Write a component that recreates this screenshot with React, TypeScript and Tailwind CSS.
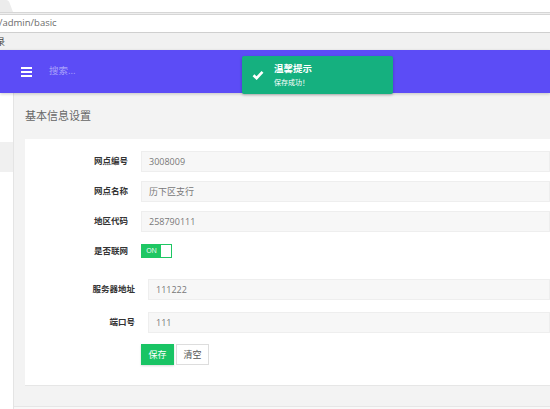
import React from 'react';

const font = "font-['Open_Sans','Noto_Sans_CJK_SC',sans-serif]";

function Field({ label, value, labelW }: { label: string; value: string; labelW: string }) {
  return (
    <div className="flex items-center">
      <div className={`${labelW} shrink-0 text-right text-[8.5px] font-bold text-[#333]`}>{label}</div>
      <div className="ml-[13px] h-[21px] flex-1 border border-[#eeeeee] bg-[#f7f7f7] pl-[7px] flex items-center text-[9px] text-[#777]">
        {value}
      </div>
    </div>
  );
}

export default function App() {
  return (
    <div className={`w-[550px] h-[409px] overflow-hidden bg-white flex flex-col ${font}`}>
      {/* browser chrome */}
      <div className="h-[12px] bg-white shrink-0">
        <svg width="16" height="12" viewBox="0 0 16 12">
          <path d="M0 0 H6 Q9 0 10 4 L13 12 H0 Z" fill="#ececec" />
        </svg>
      </div>
      <div className="h-[3px] shrink-0 border-y border-[#d6d6d6] bg-[#eeeeee]" />
      <div className="h-[18px] shrink-0 bg-white border-b border-[#cfcfcf] flex items-center overflow-hidden">
        <span className="ml-[-1px] text-[9.5px] text-[#6b6b6b]">/admin/basic</span>
      </div>
      <div className="h-[17px] shrink-0 bg-[#f1f1f1] flex items-center overflow-hidden">
        <span className="ml-[-4px] text-[9px] text-[#444]">录</span>
      </div>

      {/* header */}
      <div className="relative h-[43px] shrink-0 bg-[#5c4cf6] flex items-center shadow-[0_1px_3px_rgba(0,0,0,0.2)] z-10">
        <div className="ml-[21px] flex flex-col gap-[2px]">
          <div className="h-[2px] w-[11px] bg-white" />
          <div className="h-[2px] w-[11px] bg-white" />
          <div className="h-[2px] w-[11px] bg-white" />
        </div>
        <span className="ml-[17px] text-[9.5px] text-[#a9a1fa]">搜索...</span>

        <div className="absolute left-[242px] top-[6px] w-[151px] h-[38px] rounded-[2px] bg-[#15b07f] shadow-[0_1px_3px_rgba(0,0,0,0.25)] flex items-center">
          <svg className="ml-[10px]" width="12" height="10" viewBox="0 0 12 10">
            <path d="M1.5 5.2 L4.6 8.2 L10.5 1.8" fill="none" stroke="white" strokeWidth="2.6" />
          </svg>
          <div className="ml-[10px] flex flex-col text-white">
            <span className="text-[9.5px] font-bold leading-[13px]">温馨提示</span>
            <span className="text-[7px] leading-[11px] mt-[2px]">保存成功！</span>
          </div>
        </div>
      </div>

      {/* body */}
      <div className="flex flex-1 min-h-0">
        <div className="w-[14px] shrink-0 bg-white border-r border-[#e4e4e4] flex flex-col">
          <div className="h-[49px]" />
          <div className="h-[30px] bg-[#f0f0f0]" />
        </div>
        <div className="flex-1 bg-[#f3f3f3] flex flex-col">
          <div className="h-[46px] shrink-0 pl-[11px] flex items-center text-[11px] text-[#666]">基本信息设置</div>
          <div className="ml-[11px] h-[247px] shrink-0 bg-white border-b border-[#e6e6e6] pt-[12px] flex flex-col">
            <div className="flex flex-col gap-[9px]">
              <Field label="网点编号" value="3008009" labelW="w-[103px]" />
              <Field label="网点名称" value="历下区支行" labelW="w-[103px]" />
              <Field label="地区代码" value="258790111" labelW="w-[103px]" />
            </div>
            <div className="mt-[12px] flex items-center">
              <div className="w-[103px] shrink-0 text-right text-[8.5px] font-bold text-[#333]">是否联网</div>
              <div className="ml-[13px] h-[14px] w-[31px] border border-[#1ec763] flex">
                <div className="w-[19px] bg-[#1ec763] text-white text-[7px] flex items-center justify-center">ON</div>
                <div className="flex-1 bg-white" />
              </div>
            </div>
            <div className="mt-[21px] flex flex-col gap-[12px]">
              <Field label="服务器地址" value="111222" labelW="w-[110px]" />
              <Field label="端口号" value="111" labelW="w-[110px]" />
            </div>
            <div className="mt-[11px] ml-[116px] flex gap-[2px]">
              <button className="h-[21px] w-[33px] bg-[#19c464] text-white text-[9px] shadow-[0_1px_2px_rgba(0,0,0,0.15)]">保存</button>
              <button className="h-[21px] w-[33px] bg-white border border-[#dddddd] text-[#555] text-[9px]">清空</button>
            </div>
          </div>
          <div className="h-[20px] shrink-0" />
          <div className="flex-1 border-t border-[#e6e6e6] bg-[#f8f8f8]" />
        </div>
      </div>
    </div>
  );
}
